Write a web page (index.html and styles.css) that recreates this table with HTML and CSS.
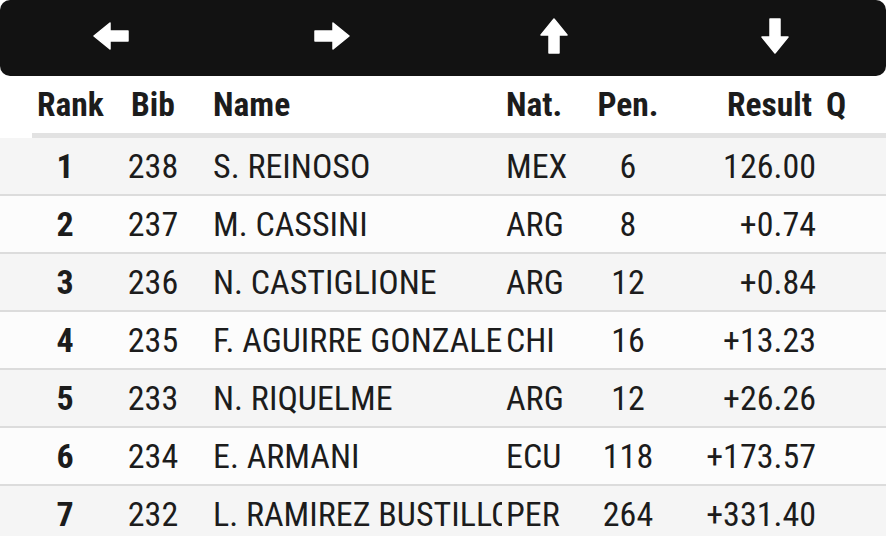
FILE: index.html
```html
<!DOCTYPE html>
<html>
<head>
<meta charset="utf-8">
<link rel="stylesheet" href="styles.css">
</head>
<body>
<div class="toolbar">
  <div class="nav-btn"><svg width="36" height="28" viewBox="0 0 36 28"><polygon points="1,14 17,1 17,9 35,9 35,19 17,19 17,27" /></svg></div>
  <div class="nav-btn"><svg width="36" height="28" viewBox="0 0 36 28"><polygon points="35,14 19,1 19,9 1,9 1,19 19,19 19,27" /></svg></div>
  <div class="nav-btn"><svg width="28" height="36" viewBox="0 0 28 36"><polygon points="14,1 27,17 19,17 19,35 9,35 9,17 1,17" /></svg></div>
  <div class="nav-btn"><svg width="28" height="36" viewBox="0 0 28 36"><polygon points="14,35 27,19 19,19 19,1 9,1 9,19 1,19" /></svg></div>
</div>
<div class="table">
  <div class="row head">
    <div class="c rank">Rank</div>
    <div class="c bib">Bib</div>
    <div class="c name">Name</div>
    <div class="c nat">Nat.</div>
    <div class="c pen">Pen.</div>
    <div class="c res">Result</div>
    <div class="c q">Q</div>
  </div>
  <div class="row odd">
    <div class="c rank">1</div><div class="c bib">238</div><div class="c name">S. REINOSO</div><div class="c nat">MEX</div><div class="c pen">6</div><div class="c res">126.00</div><div class="c q"></div>
  </div>
  <div class="row even">
    <div class="c rank">2</div><div class="c bib">237</div><div class="c name">M. CASSINI</div><div class="c nat">ARG</div><div class="c pen">8</div><div class="c res">+0.74</div><div class="c q"></div>
  </div>
  <div class="row odd">
    <div class="c rank">3</div><div class="c bib">236</div><div class="c name">N. CASTIGLIONE</div><div class="c nat">ARG</div><div class="c pen">12</div><div class="c res">+0.84</div><div class="c q"></div>
  </div>
  <div class="row even">
    <div class="c rank">4</div><div class="c bib">235</div><div class="c name">F. AGUIRRE GONZALEZ</div><div class="c nat">CHI</div><div class="c pen">16</div><div class="c res">+13.23</div><div class="c q"></div>
  </div>
  <div class="row odd">
    <div class="c rank">5</div><div class="c bib">233</div><div class="c name">N. RIQUELME</div><div class="c nat">ARG</div><div class="c pen">12</div><div class="c res">+26.26</div><div class="c q"></div>
  </div>
  <div class="row even">
    <div class="c rank">6</div><div class="c bib">234</div><div class="c name">E. ARMANI</div><div class="c nat">ECU</div><div class="c pen">118</div><div class="c res">+173.57</div><div class="c q"></div>
  </div>
  <div class="row odd">
    <div class="c rank">7</div><div class="c bib">232</div><div class="c name">L. RAMIREZ BUSTILLOS</div><div class="c nat">PER</div><div class="c pen">264</div><div class="c res">+331.40</div><div class="c q"></div>
  </div>
</div>
</body>
</html>
```
FILE: styles.css
```css
html, body {
  margin: 0;
  padding: 0;
  background: #ffffff;
}
body {
  width: 886px;
  height: 536px;
  overflow: hidden;
  font-family: "Roboto Condensed", Roboto, sans-serif;
  font-stretch: condensed;
  color: #1c1c1c;
}
.toolbar {
  display: flex;
  width: 886px;
  height: 76px;
  box-sizing: border-box;
  padding-bottom: 4px;
  background: #121212;
  border-radius: 10px;
}
.nav-btn {
  flex: 1;
  display: flex;
  align-items: center;
  justify-content: center;
}
.nav-btn svg polygon {
  fill: #ffffff;
  stroke: #ffffff;
  stroke-width: 1.5;
  stroke-linejoin: round;
}
.row {
  display: grid;
  grid-template-columns: 66px 110px 294px 88px 76px 150px 70px;
  padding-left: 32px;
  align-items: center;
  font-size: 34px;
  line-height: 1.25;
}
.head {
  height: 57px;
  background: #ffffff;
  font-weight: 700;
  font-size: 33.5px;
  border-bottom: 5px solid #e2e2e2;
  margin-left: 32px;
  padding-left: 0;
}
.odd, .even {
  height: 56px;
  border-bottom: 2px solid #dcdcdc;
}
.odd { background: #f5f5f5; }
.even { background: #fcfcfc; }
.c {
  white-space: nowrap;
}
.rank { text-align: center; font-weight: 700; }
.head .rank { text-align: left; padding-left: 5px; }
.bib { text-align: center; }
.name { padding-left: 5px; overflow: hidden; text-overflow: clip; }
.nat { text-align: left; padding-left: 4px; }
.pen { text-align: center; }
.res { text-align: right; }
.head .res { padding-right: 4px; }
.q { padding-left: 10px; }
```
